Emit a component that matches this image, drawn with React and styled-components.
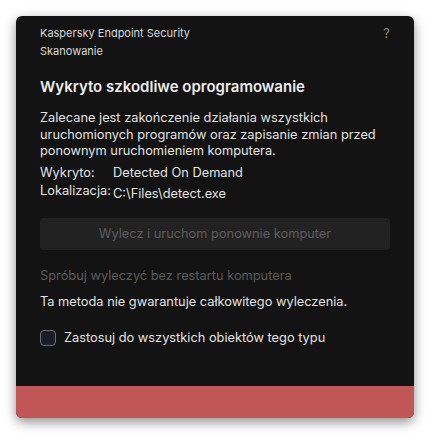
import React from "react";
import styled, { createGlobalStyle } from "styled-components";

const GlobalStyle = createGlobalStyle`
  html, body {
    margin: 0;
    padding: 0;
    background: #ffffff;
  }
  body {
    font-family: Inter, "Noto Sans", sans-serif;
  }
`;

const Page = styled.div`
  width: 430px;
  height: 434px;
  padding: 16px;
  box-sizing: border-box;
`;

const Window = styled.section`
  width: 398px;
  height: 402px;
  background: #131313;
  border-radius: 6px;
  box-shadow: 0 4px 12px rgba(0, 0, 0, 0.45);
  display: flex;
  flex-direction: column;
  overflow: hidden;
`;

const Body = styled.div`
  flex: 1;
  padding: 8px 24px 0 24px;
  color: #e6e6e6;
`;

const Header = styled.header`
  display: flex;
  justify-content: space-between;
  align-items: flex-start;
  font-size: 11px;
  line-height: 18px;
  color: #d8d8d8;
`;

const Help = styled.span`
  color: #8a8a8a;
  font-size: 13px;
`;

const Title = styled.h1`
  margin: 17px 0 13px;
  font-size: 15px;
  font-weight: 600;
  color: #ececec;
  line-height: 20px;
`;

const Text = styled.p`
  margin: 0;
  font-size: 12.8px;
  line-height: 16.5px;
  color: ${(p) => (p.$muted ? "#5c5c5c" : "#e2e2e2")};
`;

const Details = styled.div`
  display: grid;
  grid-template-columns: 73px 1fr;
  row-gap: 2px;
  margin-top: 5px;
  font-size: 12.8px;
  line-height: 16px;
  color: #e2e2e2;
`;

const Value = styled.span`
  padding-top: ${(p) => (p.$low ? "3px" : "0")};
`;

const Button = styled.button`
  display: block;
  width: 100%;
  height: 32px;
  margin-top: 16px;
  border: none;
  border-radius: 4px;
  background: #222222;
  color: #5e5e5e;
  font-family: inherit;
  font-size: 12.8px;
`;

const LinkText = styled(Text)`
  margin-top: 18px;
`;

const Note = styled(Text)`
  margin-top: 10px;
`;

const CheckRow = styled.label`
  display: flex;
  align-items: center;
  gap: 8px;
  margin-top: 19px;
  font-size: 12.8px;
  color: #e2e2e2;
`;

const Box = styled.span`
  width: 14px;
  height: 14px;
  border: 1px solid #6b6b78;
  border-radius: 4px;
  background: #1d1d28;
`;

const Footer = styled.footer`
  height: 32px;
  background: #c05656;
`;

export default function App() {
  return (
    <Page>
      <GlobalStyle />
      <Window>
        <Body>
          <Header>
            <div>
              Kaspersky Endpoint Security
              <br />
              Skanowanie
            </div>
            <Help>?</Help>
          </Header>
          <Title>Wykryto szkodliwe oprogramowanie</Title>
          <Text>
            Zalecane jest zakończenie działania wszystkich uruchomionych
            programów oraz zapisanie zmian przed ponownym uruchomieniem
            komputera.
          </Text>
          <Details>
            <span>Wykryto:</span>
            <span>Detected On Demand</span>
            <span>Lokalizacja:</span>
            <Value $low>C:\Files\detect.exe</Value>
          </Details>
          <Button disabled>Wylecz i uruchom ponownie komputer</Button>
          <LinkText $muted>Spróbuj wyleczyć bez restartu komputera</LinkText>
          <Note>Ta metoda nie gwarantuje całkowitego wyleczenia.</Note>
          <CheckRow>
            <Box />
            Zastosuj do wszystkich obiektów tego typu
          </CheckRow>
        </Body>
        <Footer />
      </Window>
    </Page>
  );
}
